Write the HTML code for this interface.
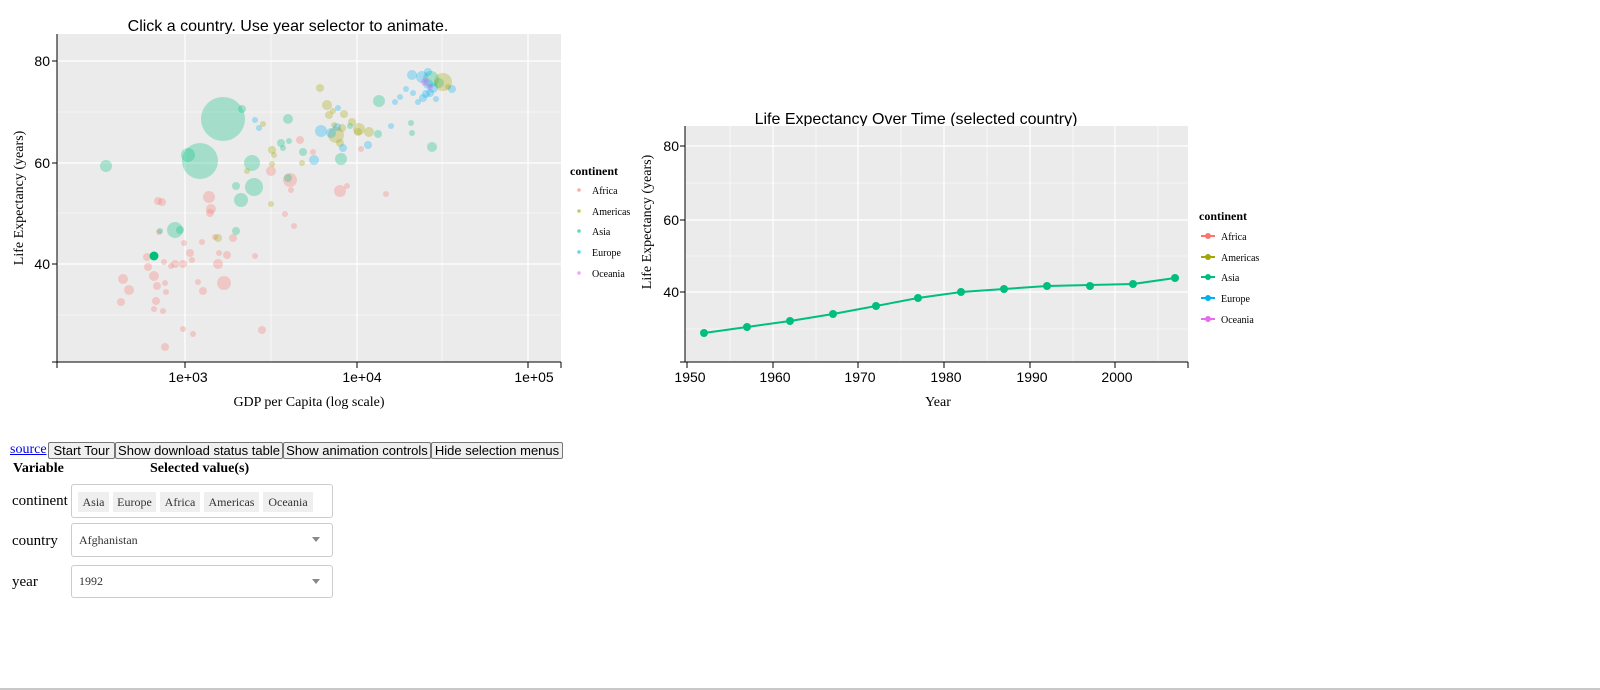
<!DOCTYPE html>
<html><head><meta charset="utf-8"><style>
body{margin:0;width:1600px;height:690px;background:#fff;position:relative;overflow:hidden;font-family:"Liberation Serif",serif}
svg{position:absolute;left:0;top:0}
.btn{position:absolute;top:442px;height:17px;border:1px solid #767676;background:#efefef;font:13px "Liberation Sans",sans-serif;line-height:16px;text-align:center;box-sizing:border-box;border-radius:2px;color:#000}
.box{position:absolute;left:71px;width:262px;border:1px solid #ccc;border-radius:3px;box-sizing:border-box;background:#fff}
.tag{position:absolute;top:7px;height:20px;background:#efefef;font-size:12px;line-height:20px;text-align:center;color:#333}
.lbl{position:absolute;left:12px;font-size:15px}
.arr{position:absolute;right:12px;top:13px;width:0;height:0;border-left:4px solid transparent;border-right:4px solid transparent;border-top:5px solid #888}
</style></head><body>
<svg width="1600" height="690" xmlns="http://www.w3.org/2000/svg">
<g font-family="Liberation Sans, sans-serif">
<text x="288" y="31" font-size="16" text-anchor="middle">Click a country. Use year selector to animate.</text>
<rect x="57" y="34" width="504" height="328" fill="#ebebeb"/>
<g stroke="#fff" stroke-width="0.6"><line x1="57" x2="561" y1="112" y2="112"/><line x1="57" x2="561" y1="213" y2="213"/><line x1="57" x2="561" y1="315" y2="315"/><line x1="271" x2="271" y1="34" y2="362"/><line x1="442" x2="442" y1="34" y2="362"/></g>
<g stroke="#fff" stroke-width="1.2"><line x1="57" x2="561" y1="61" y2="61"/><line x1="57" x2="561" y1="163" y2="163"/><line x1="57" x2="561" y1="264" y2="264"/><line x1="185" x2="185" y1="34" y2="362"/><line x1="357" x2="357" y1="34" y2="362"/><line x1="528" x2="528" y1="34" y2="362"/></g>
<g fill="#F8766D" fill-opacity="0.3">
<circle cx="123" cy="279" r="5"/><circle cx="129" cy="290" r="5"/><circle cx="121" cy="302" r="4"/><circle cx="147" cy="257" r="4"/><circle cx="148" cy="267" r="4"/><circle cx="154" cy="276" r="5"/><circle cx="156" cy="301" r="4"/><circle cx="157" cy="286" r="4"/><circle cx="158" cy="201" r="4"/><circle cx="159" cy="232" r="3"/><circle cx="163" cy="311" r="3"/><circle cx="165" cy="283" r="3"/><circle cx="166" cy="292" r="3"/><circle cx="171" cy="266" r="3"/><circle cx="175" cy="264" r="4"/><circle cx="183" cy="264" r="4"/><circle cx="184" cy="243" r="3"/><circle cx="190" cy="253" r="4"/><circle cx="192" cy="260" r="3"/><circle cx="198" cy="282" r="3"/><circle cx="203" cy="291" r="4"/><circle cx="202" cy="242" r="3"/><circle cx="211" cy="209" r="5"/><circle cx="218" cy="264" r="5"/><circle cx="219" cy="253" r="3"/><circle cx="224" cy="283" r="7"/><circle cx="227" cy="255" r="4"/><circle cx="233" cy="238" r="4"/><circle cx="255" cy="256" r="3"/><circle cx="262" cy="330" r="4"/><circle cx="193" cy="334" r="3"/><circle cx="183" cy="329" r="3"/><circle cx="165" cy="347" r="4"/><circle cx="162" cy="202" r="4"/><circle cx="154" cy="309" r="3"/><circle cx="271" cy="171" r="5"/><circle cx="290" cy="180" r="7"/><circle cx="291" cy="190" r="3"/><circle cx="285" cy="214" r="3"/><circle cx="294" cy="226" r="3"/><circle cx="340" cy="191" r="6"/><circle cx="347" cy="186" r="3"/><circle cx="300" cy="140" r="4"/><circle cx="313" cy="152" r="3"/><circle cx="361" cy="149" r="3"/><circle cx="386" cy="194" r="3"/><circle cx="209" cy="197" r="6"/><circle cx="210" cy="213" r="4"/><circle cx="215" cy="237" r="3"/><circle cx="164" cy="262" r="3"/>
</g>
<g fill="#00BF7D" fill-opacity="0.3">
<circle cx="223" cy="119" r="22"/><circle cx="200" cy="161" r="18"/><circle cx="106" cy="166" r="6"/><circle cx="175" cy="230" r="8"/><circle cx="180" cy="230" r="4"/><circle cx="188" cy="155" r="7"/><circle cx="242" cy="109" r="4"/><circle cx="252" cy="163" r="8"/><circle cx="254" cy="187" r="9"/><circle cx="241" cy="200" r="7"/><circle cx="236" cy="186" r="4"/><circle cx="288" cy="119" r="5"/><circle cx="281" cy="143" r="4"/><circle cx="283" cy="148" r="3"/><circle cx="289" cy="141" r="3"/><circle cx="236" cy="231" r="4"/><circle cx="160" cy="231" r="3"/><circle cx="378" cy="134" r="4"/><circle cx="411" cy="123" r="3"/><circle cx="412" cy="133" r="3"/><circle cx="432" cy="147" r="5"/><circle cx="431" cy="79" r="8"/><circle cx="379" cy="101" r="6"/><circle cx="288" cy="178" r="4"/><circle cx="341" cy="159" r="6"/><circle cx="439" cy="83" r="5"/><circle cx="303" cy="152" r="4"/><circle cx="350" cy="126" r="3"/>
</g>
<circle cx="154" cy="256" r="4.5" fill="#00BF7D"/>
<g fill="#A3A500" fill-opacity="0.3">
<circle cx="329" cy="115" r="4"/><circle cx="327" cy="105" r="5"/><circle cx="333" cy="111" r="3"/><circle cx="336" cy="135" r="8"/><circle cx="334" cy="125" r="3"/><circle cx="340" cy="143" r="4"/><circle cx="344" cy="114" r="4"/><circle cx="359" cy="129" r="6"/><circle cx="369" cy="132" r="5"/><circle cx="272" cy="150" r="4"/><circle cx="274" cy="155" r="3"/><circle cx="272" cy="164" r="3"/><circle cx="302" cy="163" r="3"/><circle cx="352" cy="122" r="4"/><circle cx="358" cy="132" r="4"/><circle cx="443" cy="82" r="9"/><circle cx="448" cy="87" r="3"/><circle cx="247" cy="171" r="3"/><circle cx="271" cy="204" r="3"/><circle cx="218" cy="238" r="4"/><circle cx="263" cy="124" r="3"/><circle cx="342" cy="128" r="4"/><circle cx="320" cy="88" r="4"/>
</g>
<g fill="#00B0F6" fill-opacity="0.3">
<circle cx="412" cy="75" r="5"/><circle cx="422" cy="77" r="6"/><circle cx="428" cy="84" r="5"/><circle cx="423" cy="98" r="4"/><circle cx="430" cy="93" r="4"/><circle cx="436" cy="99" r="3"/><circle cx="418" cy="102" r="3"/><circle cx="413" cy="93" r="3"/><circle cx="452" cy="89" r="4"/><circle cx="406" cy="89" r="3"/><circle cx="400" cy="97" r="3"/><circle cx="428" cy="72" r="4"/><circle cx="433" cy="88" r="5"/><circle cx="391" cy="126" r="3"/><circle cx="321" cy="131" r="6"/><circle cx="331" cy="133" r="5"/><circle cx="343" cy="148" r="4"/><circle cx="337" cy="127" r="4"/><circle cx="368" cy="145" r="4"/><circle cx="259" cy="128" r="3"/><circle cx="255" cy="120" r="3"/><circle cx="338" cy="108" r="3"/><circle cx="314" cy="160" r="5"/><circle cx="395" cy="102" r="3"/><circle cx="426" cy="94" r="4"/>
</g>
<g fill="#E76BF3" fill-opacity="0.4"><circle cx="425" cy="82" r="4"/><circle cx="430" cy="87" r="3"/></g>
<g stroke="#000" stroke-width="1"><line x1="57" y1="34" x2="57" y2="362"/><line x1="57" y1="362" x2="561" y2="362"/><line x1="52" y1="61" x2="57" y2="61"/><line x1="52" y1="163" x2="57" y2="163"/><line x1="52" y1="264" x2="57" y2="264"/><line x1="52" y1="362" x2="57" y2="362"/><line x1="57" y1="362" x2="57" y2="368"/><line x1="185" y1="362" x2="185" y2="368"/><line x1="357" y1="362" x2="357" y2="368"/><line x1="528" y1="362" x2="528" y2="368"/><line x1="561" y1="362" x2="561" y2="368"/></g>
<g font-size="14" text-anchor="end"><text x="50" y="66">80</text><text x="50" y="168">60</text><text x="50" y="269">40</text></g>
<g font-size="14" text-anchor="middle"><text x="188" y="382">1e+03</text><text x="362" y="382">1e+04</text><text x="534" y="382">1e+05</text></g>
</g>
<g font-family="Liberation Serif, serif">
<text x="309" y="406" font-size="14" text-anchor="middle">GDP per Capita (log scale)</text>
<text transform="translate(23,198) rotate(-90)" font-size="14" text-anchor="middle">Life Expectancy (years)</text>
<text x="570" y="175" font-size="12" font-weight="bold">continent</text>
<g font-size="10"><text x="592" y="194">Africa</text><text x="592" y="215">Americas</text><text x="592" y="235">Asia</text><text x="592" y="256">Europe</text><text x="592" y="277">Oceania</text></g>
<circle cx="579" cy="190" r="1.8" fill="#F8766D" fill-opacity=".6"/><circle cx="579" cy="211" r="1.8" fill="#A3A500" fill-opacity=".6"/><circle cx="579" cy="231" r="1.8" fill="#00BF7D" fill-opacity=".6"/><circle cx="579" cy="252" r="1.8" fill="#00B0F6" fill-opacity=".6"/><circle cx="579" cy="273" r="1.8" fill="#E76BF3" fill-opacity=".6"/>
</g>

<g font-family="Liberation Sans, sans-serif">
<text x="916" y="124" font-size="16" text-anchor="middle">Life Expectancy Over Time (selected country)</text>
<rect x="685" y="126" width="503" height="236" fill="#ebebeb"/>
<g stroke="#fff" stroke-width="0.6"><line x1="685" x2="1188" y1="183" y2="183"/><line x1="685" x2="1188" y1="256" y2="256"/><line x1="685" x2="1188" y1="329" y2="329"/><line x1="730" x2="730" y1="126" y2="362"/><line x1="816" x2="816" y1="126" y2="362"/><line x1="901" x2="901" y1="126" y2="362"/><line x1="987" x2="987" y1="126" y2="362"/><line x1="1073" x2="1073" y1="126" y2="362"/><line x1="1158" x2="1158" y1="126" y2="362"/></g>
<g stroke="#fff" stroke-width="1.2"><line x1="685" x2="1188" y1="146" y2="146"/><line x1="685" x2="1188" y1="220" y2="220"/><line x1="685" x2="1188" y1="292" y2="292"/><line x1="773" x2="773" y1="126" y2="362"/><line x1="858" x2="858" y1="126" y2="362"/><line x1="944" x2="944" y1="126" y2="362"/><line x1="1030" x2="1030" y1="126" y2="362"/><line x1="1115" x2="1115" y1="126" y2="362"/></g>
<polyline fill="none" stroke="#00BF7D" stroke-width="2" points="704,333 747,327 790,321 833,314 876,306 918,298 961,292 1004,289 1047,286 1090,285 1133,284 1175,278"/>
<g fill="#00BF7D"><circle cx="704" cy="333" r="4"/><circle cx="747" cy="327" r="4"/><circle cx="790" cy="321" r="4"/><circle cx="833" cy="314" r="4"/><circle cx="876" cy="306" r="4"/><circle cx="918" cy="298" r="4"/><circle cx="961" cy="292" r="4"/><circle cx="1004" cy="289" r="4"/><circle cx="1047" cy="286" r="4"/><circle cx="1090" cy="286" r="4"/><circle cx="1133" cy="284" r="4"/><circle cx="1175" cy="278" r="4"/></g>
<g stroke="#000" stroke-width="1"><line x1="685" y1="126" x2="685" y2="362"/><line x1="685" y1="362" x2="1188" y2="362"/><line x1="680" y1="146" x2="685" y2="146"/><line x1="680" y1="220" x2="685" y2="220"/><line x1="680" y1="292" x2="685" y2="292"/><line x1="680" y1="362" x2="685" y2="362"/><line x1="687" y1="362" x2="687" y2="368"/><line x1="773" y1="362" x2="773" y2="368"/><line x1="858" y1="362" x2="858" y2="368"/><line x1="944" y1="362" x2="944" y2="368"/><line x1="1030" y1="362" x2="1030" y2="368"/><line x1="1115" y1="362" x2="1115" y2="368"/><line x1="1188" y1="362" x2="1188" y2="368"/></g>
<g font-size="14" text-anchor="end"><text x="679" y="151">80</text><text x="679" y="225">60</text><text x="679" y="297">40</text></g>
<g font-size="14" text-anchor="middle"><text x="690" y="382">1950</text><text x="775" y="382">1960</text><text x="860" y="382">1970</text><text x="946" y="382">1980</text><text x="1032" y="382">1990</text><text x="1117" y="382">2000</text></g>
</g>
<g font-family="Liberation Serif, serif">
<text x="938" y="406" font-size="14" text-anchor="middle">Year</text>
<text transform="translate(651,222) rotate(-90)" font-size="14" text-anchor="middle">Life Expectancy (years)</text>
<text x="1199" y="220" font-size="12" font-weight="bold">continent</text>
<g font-size="10"><text x="1221" y="240">Africa</text><text x="1221" y="261">Americas</text><text x="1221" y="281">Asia</text><text x="1221" y="302">Europe</text><text x="1221" y="323">Oceania</text></g>
<g stroke-width="2"><line x1="1201" x2="1215" y1="236" y2="236" stroke="#F8766D"/><line x1="1201" x2="1215" y1="257" y2="257" stroke="#A3A500"/><line x1="1201" x2="1215" y1="277" y2="277" stroke="#00BF7D"/><line x1="1201" x2="1215" y1="298" y2="298" stroke="#00B0F6"/><line x1="1201" x2="1215" y1="319" y2="319" stroke="#E76BF3"/></g>
<circle cx="1208" cy="236" r="3" fill="#F8766D"/><circle cx="1208" cy="257" r="3" fill="#A3A500"/><circle cx="1208" cy="277" r="3" fill="#00BF7D"/><circle cx="1208" cy="298" r="3" fill="#00B0F6"/><circle cx="1208" cy="319" r="3" fill="#E76BF3"/>
</g>
<line x1="0" x2="1600" y1="689" y2="689" stroke="#c8c8c8" stroke-width="2"/>
</svg>

<a style="position:absolute;left:10px;top:442px;font-size:14px;color:#00e;text-decoration:underline">source</a>
<div class="btn" style="left:48px;width:67px">Start Tour</div>
<div class="btn" style="left:115px;width:168px">Show download status table</div>
<div class="btn" style="left:283px;width:148px">Show animation controls</div>
<div class="btn" style="left:431px;width:132px">Hide selection menus</div>
<div style="position:absolute;left:13px;top:461px;font-size:14px;font-weight:bold">Variable</div>
<div style="position:absolute;left:150px;top:461px;font-size:14px;font-weight:bold">Selected value(s)</div>
<div class="lbl" style="top:493px">continent</div>
<div class="box" style="top:484px;height:34px">
<div class="tag" style="left:6px;width:31px">Asia</div>
<div class="tag" style="left:41px;width:43px">Europe</div>
<div class="tag" style="left:88px;width:40px">Africa</div>
<div class="tag" style="left:132px;width:55px">Americas</div>
<div class="tag" style="left:191px;width:50px">Oceania</div>
</div>
<div class="lbl" style="top:533px">country</div>
<div class="box" style="top:523px;height:34px"><span style="position:absolute;left:7px;top:9px;font-size:12px;color:#333">Afghanistan</span><div class="arr"></div></div>
<div class="lbl" style="top:574px">year</div>
<div class="box" style="top:565px;height:33px"><span style="position:absolute;left:7px;top:8px;font-size:12px;color:#333">1992</span><div class="arr"></div></div>
</body></html>
